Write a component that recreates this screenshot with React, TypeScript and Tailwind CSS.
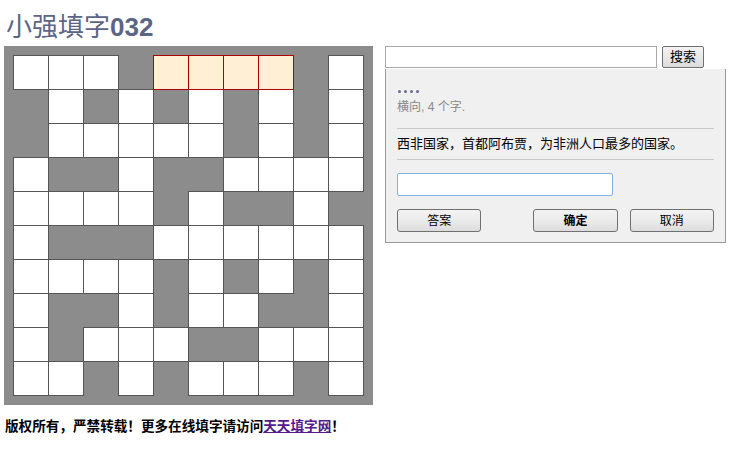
const FONT = '"Liberation Sans", "Noto Sans CJK SC", Arial, sans-serif';

// 1 = 白格, 0 = 黑格, 2 = 当前选中的格
const grid: number[][] = [
  [1, 1, 1, 0, 2, 2, 2, 2, 0, 1],
  [0, 1, 0, 1, 0, 1, 0, 1, 0, 1],
  [0, 1, 1, 1, 1, 1, 0, 1, 0, 1],
  [1, 0, 0, 1, 0, 0, 1, 1, 1, 1],
  [1, 1, 1, 1, 0, 1, 0, 0, 1, 0],
  [1, 0, 0, 0, 1, 1, 1, 1, 1, 1],
  [1, 1, 1, 1, 0, 1, 0, 1, 0, 1],
  [1, 0, 0, 1, 0, 1, 1, 0, 0, 1],
  [1, 0, 1, 1, 1, 0, 0, 1, 1, 1],
  [1, 1, 0, 1, 0, 1, 1, 1, 0, 1],
];

function Cell({ type }: { type: number }) {
  if (type === 0) {
    return <td className="w-[35px] h-[34px] p-0 bg-[#8c8c8c]" style={{ border: 'none' }} />;
  }
  if (type === 2) {
    return <td className="w-[35px] h-[34px] p-0 bg-[#fff0d5] border border-solid border-[#b00000]" />;
  }
  return <td className="w-[35px] h-[34px] p-0 bg-white border border-solid border-[#555]" />;
}

function Board() {
  return (
    <div className="bg-[#8c8c8c] p-[9px]">
      <table className="border-collapse">
        <tbody>
          {grid.map((row, i) => (
            <tr key={i}>
              {row.map((c, j) => (
                <Cell key={j} type={c} />
              ))}
            </tr>
          ))}
        </tbody>
      </table>
    </div>
  );
}

const btn =
  'h-[23px] w-[85px] text-[12px] text-black border border-[#707070] rounded-[3px] bg-gradient-to-b from-[#f3f3f3] via-[#ebebeb] to-[#dcdcdc]';

function CluePanel() {
  return (
    <div className="flex flex-col">
      <div className="flex items-start">
        <input
          type="text"
          className="w-[272px] h-[22px] bg-white border border-[#a9a9a9] outline-none"
        />
        <button className="ml-[5px] w-[42px] h-[22px] text-[13px] text-black border border-[#707070] rounded-[2px] bg-gradient-to-b from-[#f3f3f3] to-[#dcdcdc]">
          搜索
        </button>
      </div>
      <div className="w-[341px] mt-px bg-[#f0f0f0] border border-t-0 border-[#999] px-[11px] pt-[21px] pb-[10px]">
        <div className="flex gap-[3px] pl-px">
          <span className="w-[3px] h-[3px] rounded-full bg-[#6a6a90]" />
          <span className="w-[3px] h-[3px] rounded-full bg-[#6a6a90]" />
          <span className="w-[3px] h-[3px] rounded-full bg-[#6a6a90]" />
          <span className="w-[3px] h-[3px] rounded-full bg-[#6a6a90]" />
        </div>
        <div className="mt-[6px] text-[12px] leading-[16px] text-[#888]">横向, 4 个字.</div>
        <div className="mt-[13px] border-t border-[#c8c8c8]" />
        <div className="py-[7px] text-[13px] leading-[16px] text-black">
          西非国家，首都阿布贾，为非洲人口最多的国家。
        </div>
        <div className="border-t border-[#c8c8c8]" />
        <input
          type="text"
          autoFocus
          className="mt-[13px] w-[216px] h-[23px] bg-white border border-[#7eb4ea] rounded-[2px] outline-none px-[2px] text-[12px]"
        />
        <div className="mt-[13px] flex">
          <button className={btn}>答案</button>
          <button className={btn + ' ml-[52px] font-bold'}>确定</button>
          <button className={btn + ' ml-[12px]'}>取消</button>
        </div>
      </div>
    </div>
  );
}

export default function App() {
  return (
    <div className="w-[752px] h-[471px] bg-white px-[4px]" style={{ fontFamily: FONT }}>
      <h1 className="pt-[12px] pl-[2px] text-[26px] leading-[30px] text-[#5b6585] font-normal">
        小强填字<span className="font-bold">032</span>
      </h1>
      <div className="mt-[4px] flex items-start gap-[12px]">
        <Board />
        <CluePanel />
      </div>
      <p className="mt-[13px] pl-px text-[13.6px] leading-[18px] font-bold text-black">
        版权所有，严禁转载！更多在线填字请访问
        <a href="#" className="underline text-[#551a8b]">
          天天填字网
        </a>
        ！
      </p>
    </div>
  );
}
